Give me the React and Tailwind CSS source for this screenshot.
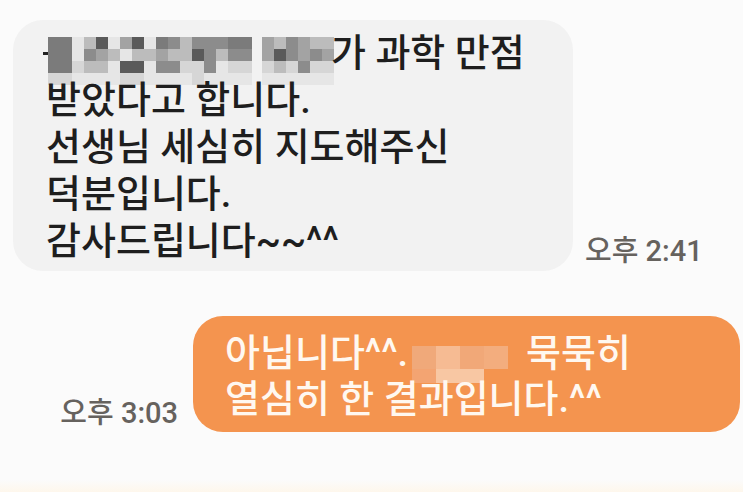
const shades = {
  a: 'bg-[#5a5a5a]',
  b: 'bg-[#7b7b7b]',
  c: 'bg-[#8c8c8c]',
  d: 'bg-[#a3a3a3]',
  e: 'bg-[#bcbcbc]',
  f: 'bg-[#d6d6d6]',
  g: 'bg-[#e6e6e6]',
};

const nameRows = [
  'bbgeagdagbcecccbb',
  'bbgcdegeedeeacecc',
  'bbfeegaagccffcgff',
  'ffggggffggggfgggg',
];

const nameRows2 = ['decdee', 'dacdcd', 'fefcff', 'gggggg'];

const Mosaic = ({ rows }) => (
  <span className="inline-flex flex-col align-middle">
    {rows.map((row, i) => (
      <span key={i} className="flex">
        {row.split('').map((ch, j) => (
          <span key={j} className={`w-[12px] h-[12px] ${shades[ch] || ''}`} />
        ))}
      </span>
    ))}
  </span>
);

const orangeShades = [
  ['bg-[#f0a97a]', 'bg-[#f6bb93]', 'bg-[#f1a878]', 'bg-[#f3ad7e]'],
  ['bg-[#f3a472]', 'bg-[#f8c7a3]', 'bg-[#f8c7a3]', ''],
];

const OrangeMosaic = () => (
  <span className="inline-flex flex-col align-middle mt-[16px]">
    {orangeShades.map((row, i) => (
      <span key={i} className="flex">
        {row.map((c, j) => (
          <span key={j} className={`w-[24px] ${i === 0 ? 'h-[23px]' : 'h-[14px]'} ${c}`} />
        ))}
      </span>
    ))}
  </span>
);

export default function App() {
  return (
    <div
      className="w-[743px] h-[492px] overflow-hidden bg-[#fbfbfb] flex flex-col font-medium"
      style={{ fontFamily: 'Roboto, "Noto Sans CJK KR", "Noto Sans", sans-serif' }}
    >
      {/* incoming message */}
      <div className="flex items-end pl-[13px] pt-[20px]">
        <div className="w-[560px] bg-[#f2f2f2] rounded-[30px] pl-[33px] pt-[10px] pb-[6px] text-[38px] leading-[47px] text-[#1e1e1e]">
          <div className="flex items-center h-[47px]">
            <span className="w-[5px] h-[3px] bg-[#222] -ml-[3px]" />
            <span className="mt-[14px] flex items-start gap-[10px]">
              <Mosaic rows={nameRows} />
              <Mosaic rows={nameRows2} />
            </span>
            <span className="-ml-[3px]">가 과학 만점</span>
          </div>
          <div>받았다고 합니다.</div>
          <div>선생님 세심히 지도해주신</div>
          <div>덕분입니다.</div>
          <div>감사드립니다~~^^</div>
        </div>
        <div className="ml-[12px] mb-[3px] text-[29px] leading-[34px] text-[#66625e]">오후 2:41</div>
      </div>

      {/* outgoing message */}
      <div className="flex items-end justify-end pr-[3px] mt-[45px]">
        <div className="mr-[15px] mb-[2px] text-[29px] leading-[34px] text-[#66625e]">오후 3:03</div>
        <div className="w-[547px] bg-[#f4944f] rounded-[30px] pl-[32px] pt-[14px] pb-[10px] text-[38px] leading-[46px] text-[#fff8f0]">
          <div className="flex items-start h-[46px]">
            <span>아닙니다^^.</span>
            <span className="ml-[4px]">
              <OrangeMosaic />
            </span>
            <span className="ml-[18px]">묵묵히</span>
          </div>
          <div>열심히 한 결과입니다.^^</div>
        </div>
      </div>

      <div className="flex-1" />
      <div className="h-[12px] bg-gradient-to-b from-[#fbfbfb] to-[#fef7ec]" />
    </div>
  );
}
